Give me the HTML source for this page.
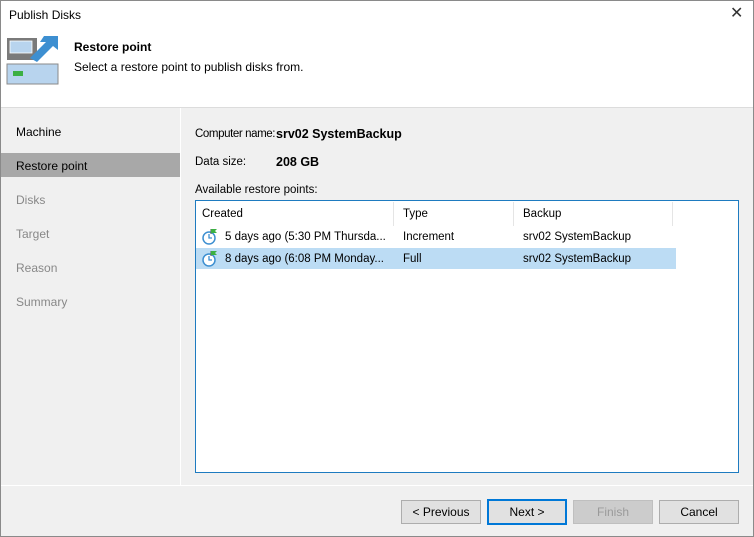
<!DOCTYPE html><html><head><style>
body{margin:0;width:754px;height:537px;overflow:hidden;font-family:"Liberation Sans",sans-serif;font-size:11.5px;color:#000;background:#f0f0f0;position:relative}
.a{position:absolute}
.t{margin-top:1px}
.win{left:0;top:0;width:752px;height:535px;border:1px solid #8a8a8a;background:#f0f0f0}
.btn{position:absolute;top:500px;height:22px;border:1px solid #adadad;background:#e1e1e1;text-align:center;line-height:22px;font-size:12px}
.nav{left:16px;font-size:12px;color:#888}
</style></head><body>
<div class="a win"></div>
<div class="a" style="left:1px;top:1px;width:752px;height:106px;background:#fff"></div>
<div class="a" style="left:9px;top:8px;font-size:12px">Publish Disks</div>
<div class="a" style="left:730px;top:3px;font-size:16px;color:#333">✕</div>
<svg class="a" style="left:6px;top:34px" width="54" height="54">
<rect x="1" y="4" width="30" height="22" fill="#7a7a7a"/><rect x="4" y="7" width="22" height="12" fill="#b8d4ee" stroke="#fff" stroke-width="0.8"/>
<path d="M24 24 L40 8 L34 8 L38 2 L52 2 L52 16 L47 12 L31 28 Z" fill="#3d8fd1"/>
<rect x="1" y="30" width="51" height="20" fill="#b8d4ee" stroke="#8a8a8a"/><rect x="7" y="37" width="10" height="5" fill="#3cb043"/>
</svg>
<div class="a" style="left:74px;top:40px;font-weight:bold;font-size:12px">Restore point</div>
<div class="a" style="left:74px;top:60px;font-size:12px">Select a restore point to publish disks from.</div>
<div class="a" style="left:1px;top:107px;width:752px;height:1px;background:#dcdcdc"></div>
<div class="a" style="left:180px;top:108px;width:1px;height:377px;background:#fff"></div>
<div class="a nav" style="top:125px;color:#000">Machine</div>
<div class="a" style="left:1px;top:153px;width:179px;height:24px;background:#a8a8a8"></div>
<div class="a nav" style="top:159px;color:#000">Restore point</div>
<div class="a nav" style="top:193px">Disks</div>
<div class="a nav" style="top:227px">Target</div>
<div class="a nav" style="top:261px">Reason</div>
<div class="a nav" style="top:295px">Summary</div>
<div class="a" style="left:195px;top:128px;letter-spacing:-0.4px">Computer name:</div>
<div class="a" style="left:276px;top:127px;font-weight:bold;font-size:12.5px">srv02 SystemBackup</div>
<div class="a" style="left:195px;top:156px">Data size:</div>
<div class="a" style="left:276px;top:155px;font-weight:bold;font-size:12.5px">208 GB</div>
<div class="a" style="left:195px;top:184px">Available restore points:</div>
<div class="a" style="left:195px;top:200px;width:542px;height:271px;border:1px solid #1e7bc0;background:#fff"></div>
<div class="a" style="left:393px;top:202px;width:1px;height:24px;background:#e5e5e5"></div>
<div class="a" style="left:513px;top:202px;width:1px;height:24px;background:#e5e5e5"></div>
<div class="a" style="left:672px;top:202px;width:1px;height:24px;background:#e5e5e5"></div>
<div class="a" style="left:202px;top:208px">Created</div>
<div class="a" style="left:403px;top:208px">Type</div>
<div class="a" style="left:523px;top:208px">Backup</div>
<div class="a" style="left:196px;top:248px;width:480px;height:21px;background:#bcdcf4"></div>
<svg class="a" style="left:201px;top:228px" width="20" height="18"><circle cx="8" cy="10" r="6" fill="#fff" stroke="#3d8fd1" stroke-width="1.5"/><path d="M8 6V10H11" stroke="#3d8fd1" fill="none" stroke-width="1.3"/><path d="M10 1V6" stroke="#555"/><path d="M10 1H16L14 3L16 5H10Z" fill="#3cb043"/></svg>
<svg class="a" style="left:201px;top:250px" width="20" height="18"><circle cx="8" cy="10" r="6" fill="#fff" stroke="#3d8fd1" stroke-width="1.5"/><path d="M8 6V10H11" stroke="#3d8fd1" fill="none" stroke-width="1.3"/><path d="M10 1V6" stroke="#555"/><path d="M10 1H16L14 3L16 5H10Z" fill="#3cb043"/></svg>
<div class="a" style="left:225px;top:231px">5 days ago (5:30 PM Thursda...</div>
<div class="a" style="left:403px;top:231px">Increment</div>
<div class="a" style="left:523px;top:231px">srv02 SystemBackup</div>
<div class="a" style="left:225px;top:253px">8 days ago (6:08 PM Monday...</div>
<div class="a" style="left:403px;top:253px">Full</div>
<div class="a" style="left:523px;top:253px">srv02 SystemBackup</div>
<div class="a" style="left:1px;top:485px;width:752px;height:1px;background:#fff"></div>
<div class="btn" style="left:401px;width:78px">&lt; Previous</div>
<div class="btn" style="left:487px;width:76px;border:2px solid #0078d7;top:499px">Next &gt;</div>
<div class="btn" style="left:573px;width:78px;background:#cccccc;border-color:#bfbfbf;color:#9a9a9a">Finish</div>
<div class="btn" style="left:659px;width:78px">Cancel</div>
</body></html>
